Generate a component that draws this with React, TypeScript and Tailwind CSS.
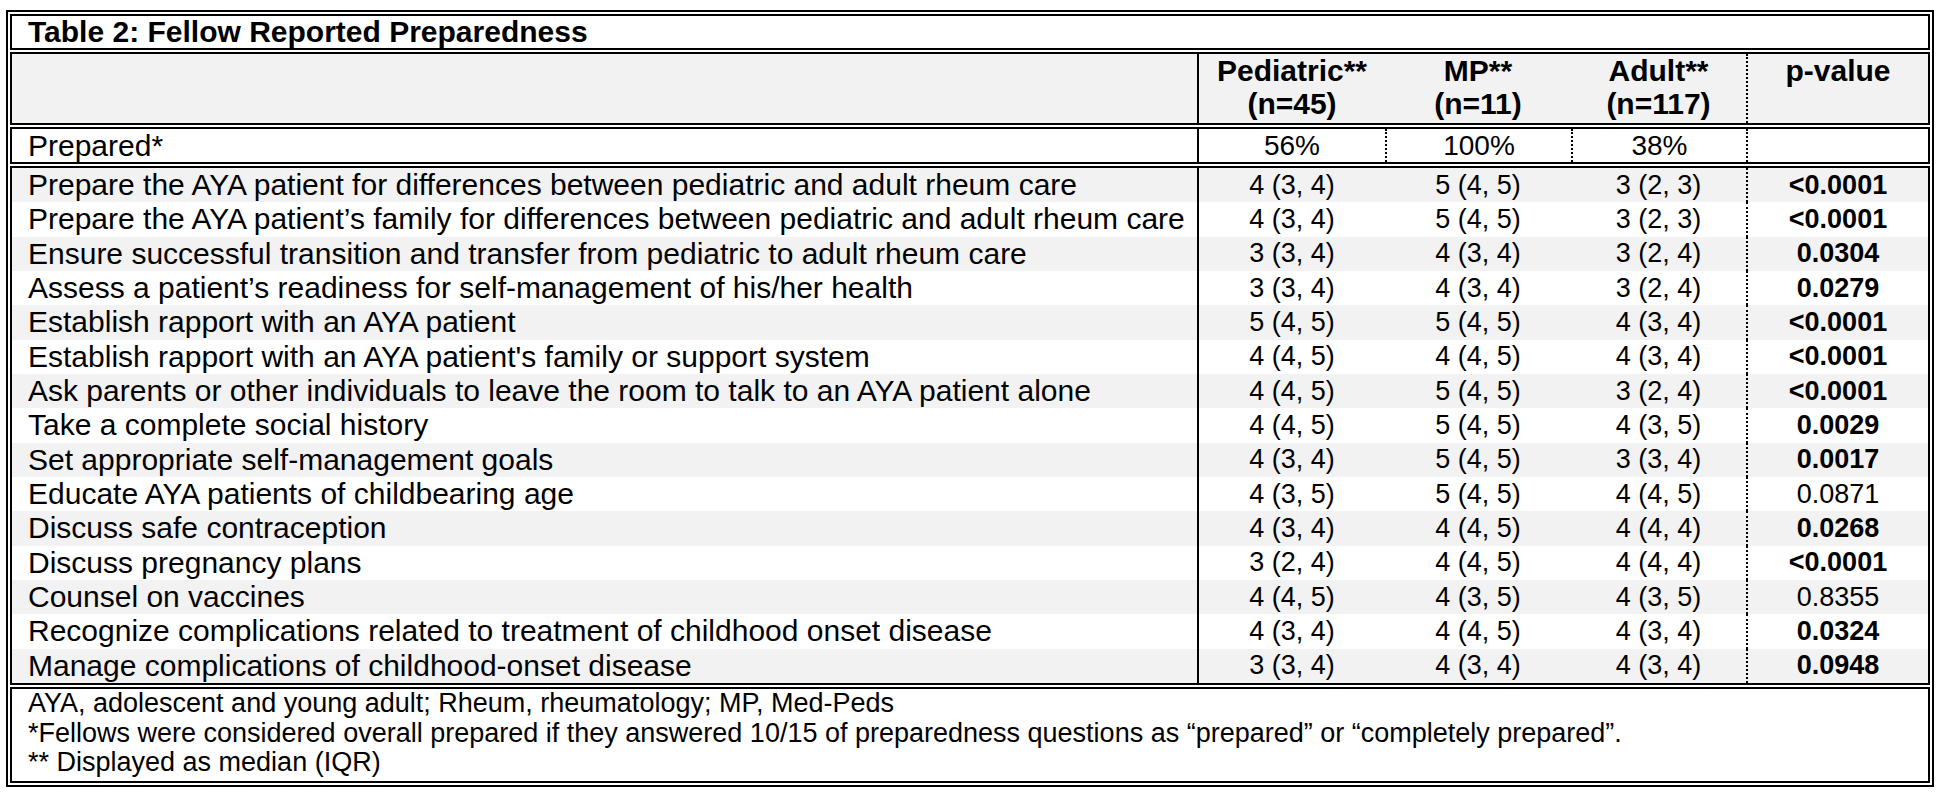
import * as React from 'react';

type Row = {
  label: string;
  ped: string;
  mp: string;
  adult: string;
  p: string;
  bold: boolean;
};

const rows: Row[] = [
  { label: 'Prepare the AYA patient for differences between pediatric and adult rheum care', ped: '4 (3, 4)', mp: '5 (4, 5)', adult: '3 (2, 3)', p: '<0.0001', bold: true },
  { label: 'Prepare the AYA patient\u2019s family for differences between pediatric and adult rheum care', ped: '4 (3, 4)', mp: '5 (4, 5)', adult: '3 (2, 3)', p: '<0.0001', bold: true },
  { label: 'Ensure successful transition and transfer from pediatric to adult rheum care', ped: '3 (3, 4)', mp: '4 (3, 4)', adult: '3 (2, 4)', p: '0.0304', bold: true },
  { label: 'Assess a patient\u2019s readiness for self-management of his/her health', ped: '3 (3, 4)', mp: '4 (3, 4)', adult: '3 (2, 4)', p: '0.0279', bold: true },
  { label: 'Establish rapport with an AYA patient', ped: '5 (4, 5)', mp: '5 (4, 5)', adult: '4 (3, 4)', p: '<0.0001', bold: true },
  { label: "Establish rapport with an AYA patient's family or support system", ped: '4 (4, 5)', mp: '4 (4, 5)', adult: '4 (3, 4)', p: '<0.0001', bold: true },
  { label: 'Ask parents or other individuals to leave the room to talk to an AYA patient alone', ped: '4 (4, 5)', mp: '5 (4, 5)', adult: '3 (2, 4)', p: '<0.0001', bold: true },
  { label: 'Take a complete social history', ped: '4 (4, 5)', mp: '5 (4, 5)', adult: '4 (3, 5)', p: '0.0029', bold: true },
  { label: 'Set appropriate self-management goals', ped: '4 (3, 4)', mp: '5 (4, 5)', adult: '3 (3, 4)', p: '0.0017', bold: true },
  { label: 'Educate AYA patients of childbearing age', ped: '4 (3, 5)', mp: '5 (4, 5)', adult: '4 (4, 5)', p: '0.0871', bold: false },
  { label: 'Discuss safe contraception', ped: '4 (3, 4)', mp: '4 (4, 5)', adult: '4 (4, 4)', p: '0.0268', bold: true },
  { label: 'Discuss pregnancy plans', ped: '3 (2, 4)', mp: '4 (4, 5)', adult: '4 (4, 4)', p: '<0.0001', bold: true },
  { label: 'Counsel on vaccines', ped: '4 (4, 5)', mp: '4 (3, 5)', adult: '4 (3, 5)', p: '0.8355', bold: false },
  { label: 'Recognize complications related to treatment of childhood onset disease', ped: '4 (3, 4)', mp: '4 (4, 5)', adult: '4 (3, 4)', p: '0.0324', bold: true },
  { label: 'Manage complications of childhood-onset disease', ped: '3 (3, 4)', mp: '4 (3, 4)', adult: '4 (3, 4)', p: '0.0948', bold: true },
];

const cols = 'grid grid-cols-[1185px_188px_186px_175px_1fr]';

export default function App() {
  return (
    <div className="min-h-screen bg-white pt-[10px] pl-[6px] text-black leading-none font-['Liberation_Sans',Arial,sans-serif]">
      <div className="w-[1928px] border-2 border-black p-[2px] flex flex-col gap-[2px]">
        {/* title */}
        <section className="border-2 border-black h-[36px] flex items-center pl-[16px]">
          <h1 className="font-bold text-[30px] leading-none">Table 2: Fellow Reported Preparedness</h1>
        </section>

        {/* header */}
        <section className={`border-2 border-black h-[73px] bg-[#f2f2f2] ${cols}`}>
          <div />
          <div className="border-l-2 border-black text-center font-bold text-[30px] leading-[33px]">
            Pediatric**
            <br />
            (n=45)
          </div>
          <div className="text-center font-bold text-[30px] leading-[33px]">
            MP**
            <br />
            (n=11)
          </div>
          <div className="text-center font-bold text-[30px] leading-[33px]">
            Adult**
            <br />
            (n=117)
          </div>
          <div className="border-l-2 border-dotted border-black text-center font-bold text-[30px] leading-[33px]">
            p-value
          </div>
        </section>

        {/* prepared */}
        <section className={`border-2 border-black h-[37px] leading-none ${cols}`}>
          <div className="pl-[16px] flex items-center text-[30px]">Prepared*</div>
          <div className="border-l-2 border-black flex items-center justify-center text-[28px]">56%</div>
          <div className="border-l-2 border-dotted border-black flex items-center justify-center text-[28px]">100%</div>
          <div className="border-l-2 border-dotted border-black flex items-center justify-center text-[28px]">38%</div>
          <div className="border-l-2 border-dotted border-black" />
        </section>

        {/* data */}
        <section className="border-2 border-black h-[519px] flex flex-col">
          {rows.map((r, i) => (
            <div
              key={r.label}
              className={`flex-1 min-h-0 leading-none ${cols} ${i % 2 === 0 ? 'bg-[#f2f2f2]' : 'bg-white'}`}
            >
              <div className="pl-[16px] flex items-center text-[30px] whitespace-nowrap">{r.label}</div>
              <div className="border-l-2 border-black flex items-center justify-center text-[27px]">{r.ped}</div>
              <div className="flex items-center justify-center text-[27px]">{r.mp}</div>
              <div className="flex items-center justify-center text-[27px]">{r.adult}</div>
              <div
                className={`border-l-2 border-dotted border-black flex items-center justify-center text-[27px] ${r.bold ? 'font-bold' : ''}`}
              >
                {r.p}
              </div>
            </div>
          ))}
        </section>

        {/* footnotes */}
        <section className="border-2 border-black h-[96px] pl-[16px] text-[27px] leading-[29.5px]">
          <p>AYA, adolescent and young adult; Rheum, rheumatology; MP, Med-Peds</p>
          <p>*Fellows were considered overall prepared if they answered 10/15 of preparedness questions as “prepared” or “completely prepared”.</p>
          <p>** Displayed as median (IQR)</p>
        </section>
      </div>
    </div>
  );
}
